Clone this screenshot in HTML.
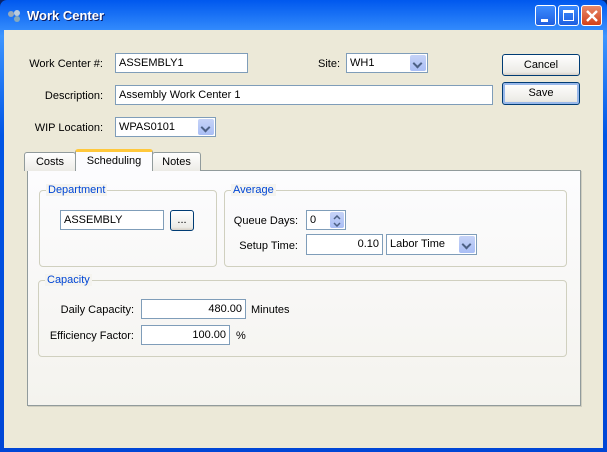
<!DOCTYPE html>
<html><head><style>
*{box-sizing:border-box;margin:0;padding:0}
body{width:607px;height:452px;overflow:hidden;font-family:"Liberation Sans",sans-serif;font-size:11px;color:#000;background:#0A246A}
.win{position:absolute;left:0;top:0;width:607px;height:452px;background:linear-gradient(#0058EE,#3D95FF 8%,#0055E5 30%,#0046D6);border-radius:7px 7px 0 0}
.body{position:absolute;left:4px;top:30px;width:599px;height:418px;background:#ECE9D8}
.title{position:absolute;left:27px;top:8px;color:#fff;font-weight:bold;font-size:13px;text-shadow:1px 1px #0A1A60}
.ab{position:absolute;}
.lbl{position:absolute;text-align:right;white-space:nowrap}
.in{position:absolute;background:#fff;border:1px solid #7F9DB9;height:20px;line-height:19px;padding:0 3px;white-space:nowrap;overflow:hidden}
.r{text-align:right}
.dd{position:absolute;right:1px;top:1px;width:16px;bottom:1px;background:linear-gradient(#C6D3F7,#A9BEF5);border-radius:2px}
.dd:after{content:"";position:absolute;left:4px;top:5px;width:5px;height:5px;border-right:2px solid #4D6185;border-bottom:2px solid #4D6185;transform:rotate(45deg)}
.sp{position:absolute;right:1px;top:1px;width:14px;bottom:1px;background:linear-gradient(#C6D3F7,#A9BEF5);border-radius:2px}
.btn{position:absolute;border:1px solid #003C74;border-radius:3px;background:linear-gradient(#fff,#ECEBE6 85%,#D6D0C5);text-align:center}
.tbtn{position:absolute;width:21px;height:21px;border:1px solid #fff;border-radius:3px;background:linear-gradient(#3C8CFF,#1F5FE0)}
.grp{position:absolute;border:1px solid #D0D0BF;border-radius:4px}
.leg{position:absolute;top:-7px;left:6px;background:#F5F4EF;color:#0046D5;padding:0 2px}
.tab{position:absolute;border:1px solid #919B9C;border-bottom:none;background:linear-gradient(#fff,#ECEBE6);text-align:center;border-radius:3px 3px 0 0}
</style></head><body>
<div class="win">
<svg class="ab" style="left:7px;top:9px" width="16" height="14"><circle cx="4" cy="5" r="3" fill="#9AB" /><circle cx="10" cy="4" r="3" fill="#BCD"/><circle cx="10" cy="10" r="3" fill="#8AB"/></svg>
<div class="title">Work Center</div>
<div class="tbtn" style="left:535px;top:5px"><div class="ab" style="left:5px;top:13px;width:7px;height:3px;background:#fff"></div></div>
<div class="tbtn" style="left:558px;top:5px"><div class="ab" style="left:4px;top:4px;width:11px;height:11px;border:1px solid #fff;border-top-width:3px"></div></div>
<div class="tbtn" style="left:581px;top:5px;background:linear-gradient(#E88A6A,#D2401A)"><svg class="ab" style="left:4px;top:4px" width="12" height="12"><path d="M1 1L11 11M11 1L1 11" stroke="#fff" stroke-width="2.4"/></svg></div>
<div class="body"></div>
</div>
<div class="lbl" style="left:20px;top:58px;width:83px">Work Center #:</div>
<div class="in" style="left:115px;top:53px;width:133px">ASSEMBLY1</div>
<div class="lbl" style="left:300px;top:58px;width:40px">Site:</div>
<div class="in" style="left:346px;top:53px;width:82px">WH1<div class="dd"></div></div>
<div class="btn" style="left:502px;top:54px;width:78px;height:22px;line-height:21px">Cancel</div>
<div class="btn" style="left:502px;top:82px;width:78px;height:23px;line-height:21px;box-shadow:inset 0 0 0 2px #98B8EA">Save</div>
<div class="lbl" style="left:20px;top:90px;width:83px">Description:</div>
<div class="in" style="left:115px;top:85px;width:378px">Assembly Work Center 1</div>
<div class="lbl" style="left:20px;top:122px;width:83px">WIP Location:</div>
<div class="in" style="left:115px;top:117px;width:101px">WPAS0101<div class="dd"></div></div>

<div class="ab" style="left:27px;top:170px;width:554px;height:236px;background:linear-gradient(#FCFCFE,#F4F3EE);border:1px solid #919B9C;box-shadow:1px 1px 0 #D0CEBF"></div>
<div class="tab" style="left:24px;top:152px;width:52px;height:19px;line-height:18px">Costs</div>
<div class="tab" style="left:152px;top:152px;width:49px;height:19px;line-height:18px">Notes</div>
<div class="tab" style="left:75px;top:149px;width:78px;height:22px;line-height:19px;background:#FCFCFE;border-top:3px solid #FFC83C">Scheduling</div>

<div class="grp" style="left:39px;top:190px;width:178px;height:77px"><span class="leg">Department</span></div>
<div class="in" style="left:60px;top:210px;width:104px">ASSEMBLY</div>
<div class="btn" style="left:170px;top:210px;width:24px;height:21px;line-height:18px">...</div>
<div class="grp" style="left:224px;top:190px;width:343px;height:77px"><span class="leg">Average</span></div>
<div class="lbl" style="left:220px;top:215px;width:78px">Queue Days:</div>
<div class="in" style="left:306px;top:210px;width:40px">0<div class="sp"><svg class="ab" style="left:3px;top:3px" width="8" height="12"><path d="M1 4L4 1L7 4M1 8L4 11L7 8" fill="none" stroke="#4D6185" stroke-width="1.5"/></svg></div></div>
<div class="lbl" style="left:220px;top:240px;width:78px">Setup Time:</div>
<div class="in r" style="left:306px;top:234px;width:77px;height:21px">0.10</div>
<div class="in" style="left:386px;top:234px;width:91px;height:21px">Labor Time<div class="dd"></div></div>

<div class="grp" style="left:38px;top:280px;width:529px;height:77px"><span class="leg">Capacity</span></div>
<div class="lbl" style="left:40px;top:304px;width:94px">Daily Capacity:</div>
<div class="in r" style="left:141px;top:299px;width:105px">480.00</div>
<div class="ab" style="left:251px;top:304px">Minutes</div>
<div class="lbl" style="left:40px;top:330px;width:94px">Efficiency Factor:</div>
<div class="in r" style="left:141px;top:325px;width:89px">100.00</div>
<div class="ab" style="left:236px;top:330px">%</div>
</body></html>
